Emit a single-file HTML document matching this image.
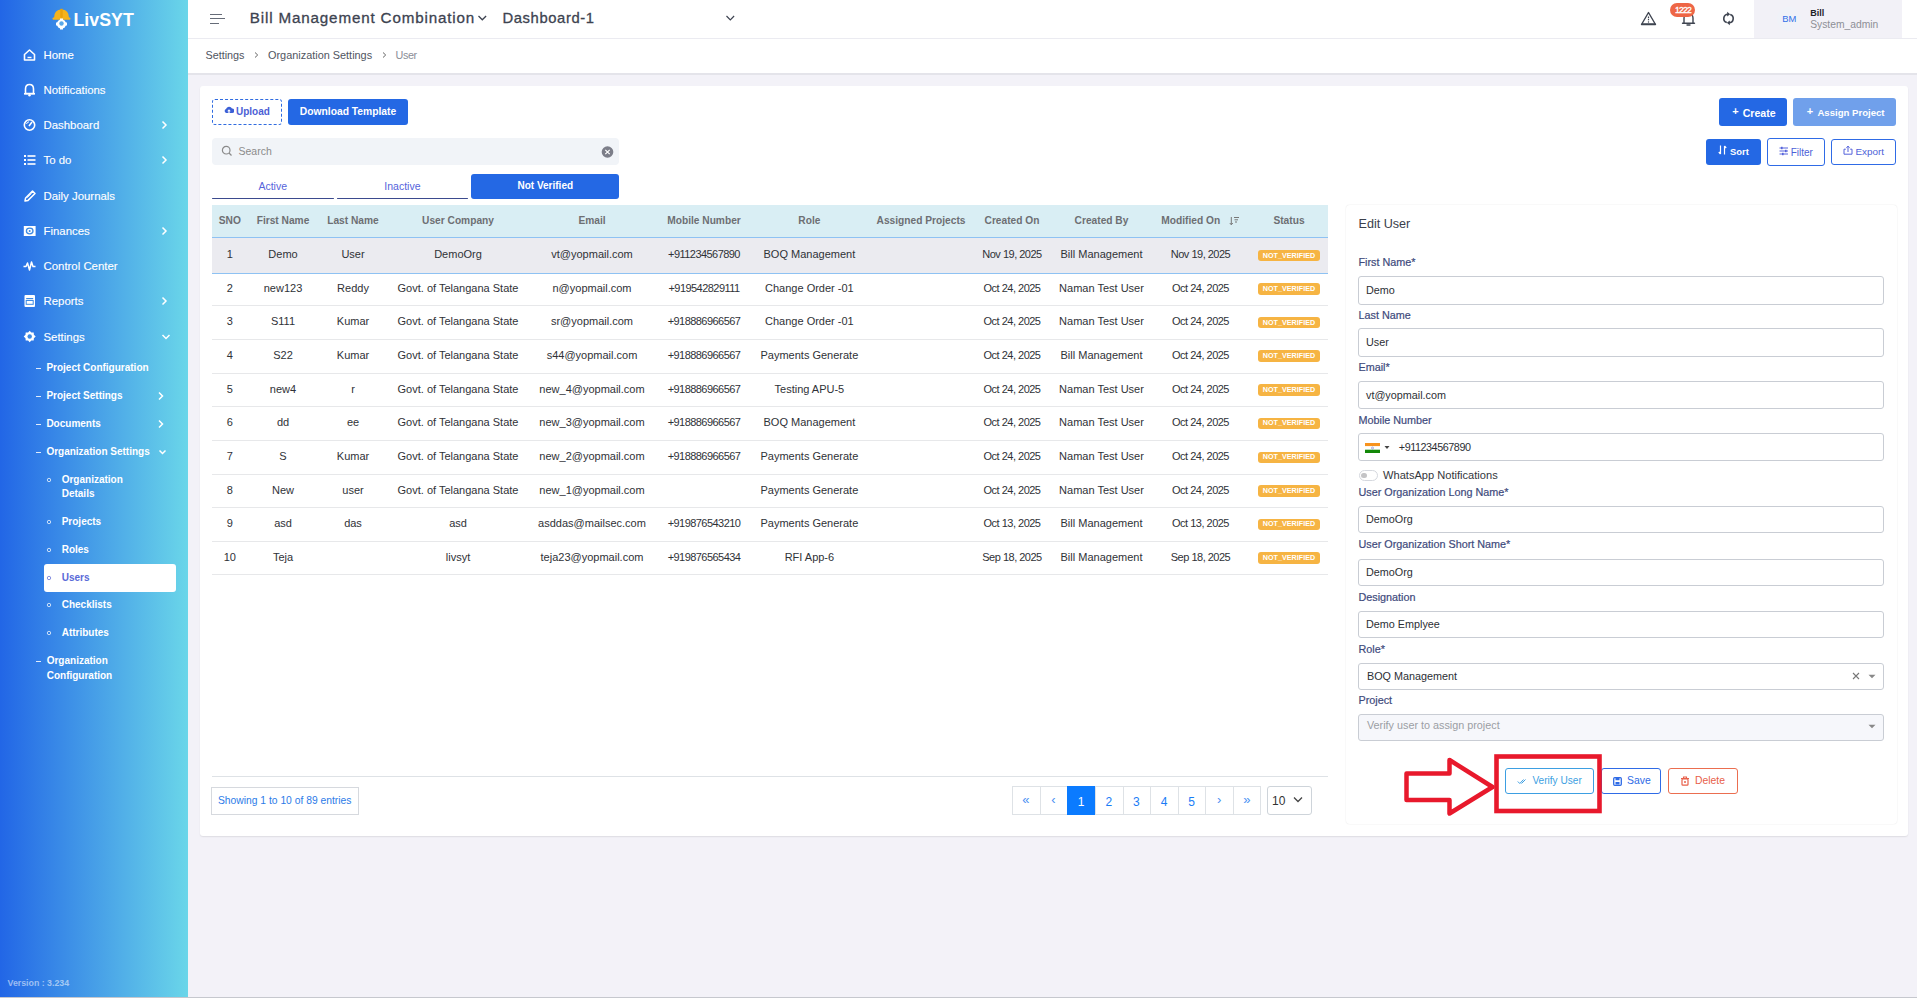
<!DOCTYPE html>
<html><head><meta charset="utf-8"><title>LivSYT - Users</title>
<style>
html,body{margin:0;padding:0;}
body{width:1917px;height:998px;overflow:hidden;position:relative;background:#f3f2f8;font-family:"Liberation Sans", sans-serif;}
.t{position:absolute;white-space:nowrap;}
.b{position:absolute;box-sizing:border-box;}
</style></head><body>

<div class="b" style="left:0px;top:0px;width:188px;height:998px;background:linear-gradient(90deg,#2266e6 0%,#6ad6e9 100%);"></div>
<svg class="b" style="left:52px;top:8px;" width="19" height="22" viewBox="0 0 19 22">
<path d="M2 10 Q2 1.5 9.5 1.5 Q17 1.5 17 10 Z" fill="#f5b31b"/>
<rect x="0.5" y="9.5" width="18" height="2.2" rx="1" fill="#f5b31b"/>
<rect x="8.3" y="0.8" width="2.4" height="9" fill="#e9a20c"/>
<circle cx="9.5" cy="16" r="4.6" fill="#fff"/>
<rect x="8" y="10.5" width="3" height="11" fill="#fff"/>
<rect x="4" y="14.5" width="11" height="3" fill="#fff"/>
<circle cx="9.5" cy="15.5" r="2.2" fill="#5aa8e8"/>
</svg>
<div class="t" style="left:73.50px;top:9.70px;font-size:17.8px;color:#fff;font-weight:bold;line-height:20px;">LivSYT</div>
<svg class="b" style="left:22.5px;top:48px;" width="13.5" height="14" viewBox="0 0 13.5 14"><path d="M1.5 6.5 L6.5 2 L11.5 6.5 V12 H1.5 Z" fill="none" stroke="#fff" stroke-width="1.6" stroke-linejoin="round"/><line x1="4.5" y1="9.5" x2="8.5" y2="9.5" stroke="#fff" stroke-width="1.4"/></svg>
<div class="t" style="left:43.50px;top:45.33px;font-size:11.4px;color:#fff;font-weight:normal;line-height:20px;-webkit-text-stroke:0.12px #fff;">Home</div>
<svg class="b" style="left:22.5px;top:83px;" width="13.5" height="14" viewBox="0 0 13.5 14"><path d="M2.5 10.5 V6 Q2.5 1.5 6.5 1.5 Q10.5 1.5 10.5 6 V10.5 Z" fill="none" stroke="#fff" stroke-width="1.6"/><line x1="1" y1="10.8" x2="12" y2="10.8" stroke="#fff" stroke-width="1.6"/><circle cx="6.5" cy="12.3" r="1.2" fill="#fff"/></svg>
<div class="t" style="left:43.50px;top:80.23px;font-size:11.4px;color:#fff;font-weight:normal;line-height:20px;-webkit-text-stroke:0.12px #fff;">Notifications</div>
<svg class="b" style="left:22.5px;top:118px;" width="13.5" height="14" viewBox="0 0 13.5 14"><circle cx="6.5" cy="7" r="5.2" fill="none" stroke="#fff" stroke-width="1.6"/><line x1="6" y1="8" x2="9" y2="4" stroke="#fff" stroke-width="1.5"/><path d="M3.5 6 A3 3 0 0 1 6 3.8" fill="none" stroke="#fff" stroke-width="1"/></svg>
<div class="t" style="left:43.50px;top:115.33px;font-size:11.4px;color:#fff;font-weight:normal;line-height:20px;-webkit-text-stroke:0.12px #fff;">Dashboard</div>
<svg class="b" style="left:160px;top:120px;" width="8" height="10" viewBox="0 0 8 10"><polyline points="2.5,1.5 6,5 2.5,8.5" fill="none" stroke="#fff" stroke-width="1.5"/></svg>
<svg class="b" style="left:22.5px;top:153px;" width="13.5" height="14" viewBox="0 0 13.5 14"><rect x="1" y="2" width="2" height="2" fill="#fff"/><rect x="4.5" y="2.2" width="8" height="1.6" fill="#fff"/><rect x="1" y="6" width="2" height="2" fill="#fff"/><rect x="4.5" y="6.2" width="8" height="1.6" fill="#fff"/><rect x="1" y="10" width="2" height="2" fill="#fff"/><rect x="4.5" y="10.2" width="8" height="1.6" fill="#fff"/></svg>
<div class="t" style="left:43.50px;top:150.13px;font-size:11.4px;color:#fff;font-weight:normal;line-height:20px;-webkit-text-stroke:0.12px #fff;">To do</div>
<svg class="b" style="left:160px;top:155px;" width="8" height="10" viewBox="0 0 8 10"><polyline points="2.5,1.5 6,5 2.5,8.5" fill="none" stroke="#fff" stroke-width="1.5"/></svg>
<svg class="b" style="left:22.5px;top:189px;" width="13.5" height="14" viewBox="0 0 13.5 14"><path d="M2 12 L2.6 9 L9.5 2 L12 4.5 L5 11.4 Z" fill="none" stroke="#fff" stroke-width="1.5" stroke-linejoin="round"/><line x1="4" y1="8.8" x2="8.5" y2="4.3" stroke="#fff" stroke-width="1"/></svg>
<div class="t" style="left:43.50px;top:186.13px;font-size:11.4px;color:#fff;font-weight:normal;line-height:20px;-webkit-text-stroke:0.12px #fff;">Daily Journals</div>
<svg class="b" style="left:22.5px;top:224px;" width="13.5" height="14" viewBox="0 0 13.5 14"><rect x="0.8" y="2" width="11.8" height="10" fill="#fff"/><ellipse cx="6.7" cy="7" rx="3.3" ry="2.8" fill="none" stroke="#3d8ae4" stroke-width="1.3"/><circle cx="6.7" cy="7" r="1" fill="#3d8ae4"/></svg>
<div class="t" style="left:43.50px;top:221.13px;font-size:11.4px;color:#fff;font-weight:normal;line-height:20px;-webkit-text-stroke:0.12px #fff;">Finances</div>
<svg class="b" style="left:160px;top:226px;" width="8" height="10" viewBox="0 0 8 10"><polyline points="2.5,1.5 6,5 2.5,8.5" fill="none" stroke="#fff" stroke-width="1.5"/></svg>
<svg class="b" style="left:22.5px;top:259px;" width="13.5" height="14" viewBox="0 0 13.5 14"><polyline points="0.5,7.5 3,7.5 4.5,4 6.5,11 8.5,3 10,7.5 12.5,7.5" fill="none" stroke="#fff" stroke-width="1.5" stroke-linejoin="round"/></svg>
<div class="t" style="left:43.50px;top:256.43px;font-size:11.4px;color:#fff;font-weight:normal;line-height:20px;-webkit-text-stroke:0.12px #fff;">Control Center</div>
<svg class="b" style="left:22.5px;top:294px;" width="13.5" height="14" viewBox="0 0 13.5 14"><rect x="1.5" y="1" width="10.5" height="12" rx="1" fill="#fff"/><rect x="3.2" y="4" width="7" height="1.2" fill="#3d8ae4"/><rect x="3.2" y="6.5" width="7" height="3.8" fill="none" stroke="#3d8ae4" stroke-width="1"/></svg>
<div class="t" style="left:43.50px;top:291.33px;font-size:11.4px;color:#fff;font-weight:normal;line-height:20px;-webkit-text-stroke:0.12px #fff;">Reports</div>
<svg class="b" style="left:160px;top:296px;" width="8" height="10" viewBox="0 0 8 10"><polyline points="2.5,1.5 6,5 2.5,8.5" fill="none" stroke="#fff" stroke-width="1.5"/></svg>
<svg class="b" style="left:22.5px;top:330px;" width="13.5" height="14" viewBox="0 0 13.5 14"><path d="M6.7 0.8 L8.3 2.6 L10.7 2.4 L10.9 4.8 L12.7 6.5 L10.9 8.2 L10.7 10.6 L8.3 10.4 L6.7 12.2 L5.1 10.4 L2.7 10.6 L2.5 8.2 L0.7 6.5 L2.5 4.8 L2.7 2.4 L5.1 2.6 Z" fill="#fff"/><circle cx="6.7" cy="6.5" r="2.2" fill="#3d8ae4"/></svg>
<div class="t" style="left:43.50px;top:326.93px;font-size:11.4px;color:#fff;font-weight:normal;line-height:20px;-webkit-text-stroke:0.12px #fff;">Settings</div>
<svg class="b" style="left:161px;top:333px;" width="10" height="8" viewBox="0 0 10 8"><polyline points="1.5,2 5,5.5 8.5,2" fill="none" stroke="#fff" stroke-width="1.5"/></svg>
<div class="b" style="left:35.7px;top:367.5px;width:5.099999999999994px;height:1.0px;background:rgba(255,255,255,0.85);"></div>
<div class="t" style="left:46.40px;top:357.62px;font-size:10px;color:#fff;font-weight:bold;line-height:20px;">Project Configuration</div>
<div class="b" style="left:35.7px;top:395.7px;width:5.099999999999994px;height:1.0px;background:rgba(255,255,255,0.85);"></div>
<div class="t" style="left:46.40px;top:385.81px;font-size:10px;color:#fff;font-weight:bold;line-height:20px;">Project Settings</div>
<svg class="b" style="left:157px;top:391px;" width="8" height="10" viewBox="0 0 8 10"><polyline points="2,1.5 5.5,5 2,8.5" fill="none" stroke="#fff" stroke-width="1.5"/></svg>
<div class="b" style="left:35.7px;top:423.6px;width:5.099999999999994px;height:1.0px;background:rgba(255,255,255,0.85);"></div>
<div class="t" style="left:46.40px;top:413.72px;font-size:10px;color:#fff;font-weight:bold;line-height:20px;">Documents</div>
<svg class="b" style="left:157px;top:419px;" width="8" height="10" viewBox="0 0 8 10"><polyline points="2,1.5 5.5,5 2,8.5" fill="none" stroke="#fff" stroke-width="1.5"/></svg>
<div class="b" style="left:35.7px;top:451.7px;width:5.099999999999994px;height:1.0px;background:rgba(255,255,255,0.85);"></div>
<div class="t" style="left:46.40px;top:441.81px;font-size:10px;color:#fff;font-weight:bold;line-height:20px;">Organization Settings</div>
<svg class="b" style="left:157.5px;top:449px;" width="9" height="7" viewBox="0 0 9 7"><polyline points="1.5,1.5 4.5,4.5 7.5,1.5" fill="none" stroke="#fff" stroke-width="1.5"/></svg>
<div class="b" style="left:44px;top:564px;width:132px;height:28px;background:#fff;border-radius:3px;"></div>
<svg class="b" style="left:46px;top:477px;" width="6" height="6" viewBox="0 0 6 6"><circle cx="3" cy="3" r="1.7" fill="none" stroke="rgba(255,255,255,0.8)" stroke-width="0.9"/></svg>
<div class="t" style="left:61.70px;top:469.92px;font-size:10px;color:#fff;font-weight:bold;line-height:20px;">Organization</div>
<div class="t" style="left:61.70px;top:483.72px;font-size:10px;color:#fff;font-weight:bold;line-height:20px;">Details</div>
<svg class="b" style="left:46px;top:519px;" width="6" height="6" viewBox="0 0 6 6"><circle cx="3" cy="3" r="1.7" fill="none" stroke="rgba(255,255,255,0.8)" stroke-width="0.9"/></svg>
<div class="t" style="left:61.70px;top:511.82px;font-size:10px;color:#fff;font-weight:bold;line-height:20px;">Projects</div>
<svg class="b" style="left:46px;top:547px;" width="6" height="6" viewBox="0 0 6 6"><circle cx="3" cy="3" r="1.7" fill="none" stroke="rgba(255,255,255,0.8)" stroke-width="0.9"/></svg>
<div class="t" style="left:61.70px;top:539.82px;font-size:10px;color:#fff;font-weight:bold;line-height:20px;">Roles</div>
<svg class="b" style="left:46px;top:575px;" width="6" height="6" viewBox="0 0 6 6"><circle cx="3" cy="3" r="1.7" fill="none" stroke="#7a84dc" stroke-width="0.9"/></svg>
<div class="t" style="left:61.70px;top:567.91px;font-size:10px;color:#5a6ad8;font-weight:bold;line-height:20px;">Users</div>
<svg class="b" style="left:46px;top:602px;" width="6" height="6" viewBox="0 0 6 6"><circle cx="3" cy="3" r="1.7" fill="none" stroke="rgba(255,255,255,0.8)" stroke-width="0.9"/></svg>
<div class="t" style="left:61.70px;top:594.82px;font-size:10px;color:#fff;font-weight:bold;line-height:20px;">Checklists</div>
<svg class="b" style="left:46px;top:630px;" width="6" height="6" viewBox="0 0 6 6"><circle cx="3" cy="3" r="1.7" fill="none" stroke="rgba(255,255,255,0.8)" stroke-width="0.9"/></svg>
<div class="t" style="left:61.70px;top:622.82px;font-size:10px;color:#fff;font-weight:bold;line-height:20px;">Attributes</div>
<div class="b" style="left:36px;top:660.8px;width:5px;height:1.0px;background:rgba(255,255,255,0.85);"></div>
<div class="t" style="left:46.70px;top:650.91px;font-size:10px;color:#fff;font-weight:bold;line-height:20px;">Organization</div>
<div class="t" style="left:46.70px;top:665.51px;font-size:10px;color:#fff;font-weight:bold;line-height:20px;">Configuration</div>
<div class="t" style="left:7.50px;top:972.90px;font-size:8.8px;color:rgba(255,255,255,0.55);font-weight:bold;line-height:20px;">Version : 3.234</div>
<div class="b" style="left:188px;top:0px;width:1729px;height:38px;background:#fff;"></div>
<div class="b" style="left:188px;top:38px;width:1729px;height:1px;background:#ebebf1;"></div>
<div class="b" style="left:210px;top:13.5px;width:12px;height:1.3000000000000007px;background:#666c78;"></div>
<div class="b" style="left:210px;top:18.2px;width:15px;height:1.3000000000000007px;background:#666c78;"></div>
<div class="b" style="left:210px;top:22.9px;width:9px;height:1.3000000000000007px;background:#666c78;"></div>
<div class="t" style="left:249.80px;top:8.37px;font-size:15.2px;color:#3d4350;font-weight:normal;line-height:20px;letter-spacing:0.84px;-webkit-text-stroke:0.3px #3d4350;">Bill Management Combination</div>
<svg class="b" style="left:477px;top:14px;" width="11" height="8" viewBox="0 0 11 8"><polyline points="1.5,2 5.3,5.8 9.1,2" fill="none" stroke="#3d4350" stroke-width="1.3"/></svg>
<div class="t" style="left:502.50px;top:7.87px;font-size:14.8px;color:#3d4350;font-weight:normal;line-height:20px;letter-spacing:0.6px;-webkit-text-stroke:0.3px #3d4350;">Dashboard-1</div>
<svg class="b" style="left:725px;top:14px;" width="11" height="8" viewBox="0 0 11 8"><polyline points="1.5,2 5.3,5.8 9.1,2" fill="none" stroke="#3d4350" stroke-width="1.2"/></svg>
<svg class="b" style="left:1640px;top:11px;" width="17" height="15" viewBox="0 0 17 15"><path d="M8.5 1.5 L15.5 13.5 H1.5 Z" fill="none" stroke="#3e4450" stroke-width="1.4" stroke-linejoin="round"/><rect x="1.5" y="12.3" width="14" height="1.3" fill="#3e4450"/><line x1="8.5" y1="5.5" x2="8.5" y2="9.5" stroke="#3e4450" stroke-width="1.2" stroke-dasharray="1.5 0.8"/><circle cx="8.5" cy="11" r="0.7" fill="#3e4450"/></svg>
<svg class="b" style="left:1681px;top:12px;" width="15" height="15" viewBox="0 0 15 15"><path d="M3 11 V6 Q3 2 7.5 2 Q12 2 12 6 V11" fill="none" stroke="#3e4450" stroke-width="1.4"/><line x1="1.5" y1="11.3" x2="13.5" y2="11.3" stroke="#3e4450" stroke-width="1.4" stroke-linecap="round"/><path d="M6 13 H9" stroke="#3e4450" stroke-width="1.4" stroke-linecap="round"/></svg>
<div class="b" style="left:1670px;top:3px;width:25px;height:14px;background:#ee6646;border-radius:7px;"></div>
<div class="t" style="left:1668.00px;top:0.30px;width:30px;text-align:center;font-size:8.6px;color:#fff;font-weight:normal;line-height:20px;letter-spacing:-0.75px;-webkit-text-stroke:0.35px #fff;">1222</div>
<svg class="b" style="left:1721px;top:11px;" width="15" height="15" viewBox="0 0 15 15"><path d="M7 3.2 A4.3 4.3 0 0 0 5.8 11.6" fill="none" stroke="#3e4450" stroke-width="1.6"/><path d="M8 11.8 A4.3 4.3 0 0 0 9.2 3.4" fill="none" stroke="#3e4450" stroke-width="1.6"/><path d="M6.2 0.8 L9.2 3.2 L6.2 5.6 Z" fill="#3e4450"/><path d="M8.8 9.4 L5.8 11.8 L8.8 14.2 Z" fill="#3e4450"/></svg>
<div class="b" style="left:1754px;top:0px;width:148px;height:38px;background:#f2f1f7;"></div>
<div class="b" style="left:1777px;top:6.5px;width:24px;height:24.0px;background:#f0f2f8;border-radius:50%;"></div>
<div class="t" style="left:1774.20px;top:8.81px;width:30px;text-align:center;font-size:9.4px;color:#3070e8;font-weight:normal;line-height:20px;">BM</div>
<div class="t" style="left:1810.20px;top:2.50px;font-size:9px;color:#1f2328;font-weight:bold;line-height:20px;">Bill</div>
<div class="t" style="left:1810.20px;top:14.62px;font-size:10.3px;color:#8d8f96;font-weight:normal;line-height:20px;">System_admin</div>
<div class="b" style="left:188px;top:39px;width:1729px;height:34px;background:#fff;"></div>
<div class="b" style="left:188px;top:73px;width:1729px;height:2px;background:#e4e4ea;"></div>
<div class="t" style="left:205.50px;top:44.72px;font-size:10.8px;color:#50555f;font-weight:normal;line-height:20px;">Settings</div>
<svg class="b" style="left:253px;top:51px;" width="7" height="8" viewBox="0 0 7 8"><polyline points="2,1.5 4.7,4 2,6.5" fill="none" stroke="#666" stroke-width="1"/></svg>
<div class="t" style="left:268.00px;top:44.73px;font-size:10.9px;color:#50555f;font-weight:normal;line-height:20px;">Organization Settings</div>
<svg class="b" style="left:381px;top:51px;" width="7" height="8" viewBox="0 0 7 8"><polyline points="2,1.5 4.7,4 2,6.5" fill="none" stroke="#666" stroke-width="1"/></svg>
<div class="t" style="left:395.60px;top:44.72px;font-size:10.8px;color:#8a8e97;font-weight:normal;line-height:20px;letter-spacing:-0.4px;">User</div>
<div class="b" style="left:200px;top:86px;width:1708px;height:750px;background:#fff;border-radius:3px;box-shadow:0 1px 1.5px rgba(0,0,0,0.09);"></div>
<div class="b" style="left:212px;top:99px;width:70px;height:26px;border:1.3px dashed #2f6be0;border-radius:3px;"></div>
<svg class="b" style="left:223.5px;top:106px;" width="10" height="8" viewBox="0 0 10 8"><path d="M2.2 7 A2.1 2.1 0 0 1 2 3 A3.2 3.2 0 0 1 8 2.6 A2.2 2.2 0 0 1 8.3 7 Z" fill="#3b5fd6"/><path d="M5 3.3 L3.2 5.2 H4.4 V7 H5.6 V5.2 H6.8 Z" fill="#fff"/></svg>
<div class="t" style="left:236.00px;top:101.61px;font-size:10px;color:#4c5fd5;font-weight:bold;line-height:20px;">Upload</div>
<div class="b" style="left:288px;top:99px;width:120px;height:26px;background:#2468e4;border-radius:3px;"></div>
<div class="t" style="left:288.00px;top:101.92px;width:120px;text-align:center;font-size:10.3px;color:#fff;font-weight:bold;line-height:20px;">Download Template</div>
<div class="b" style="left:212px;top:138px;width:407px;height:27px;background:#f1f4f8;border-radius:4px;"></div>
<svg class="b" style="left:221px;top:145px;" width="12" height="12" viewBox="0 0 12 12"><circle cx="5.2" cy="5.2" r="3.8" fill="none" stroke="#8a8a8a" stroke-width="1.2"/><line x1="8" y1="8" x2="10.5" y2="10.5" stroke="#8a8a8a" stroke-width="1.3"/></svg>
<div class="t" style="left:238.50px;top:141.12px;font-size:10.5px;color:#8b8b8b;font-weight:normal;line-height:20px;">Search</div>
<svg class="b" style="left:601px;top:146px;" width="13" height="12" viewBox="0 0 13 12"><circle cx="6.5" cy="6" r="5.8" fill="#7c7e89"/><path d="M4.3 3.8 L8.7 8.2 M8.7 3.8 L4.3 8.2" stroke="#fff" stroke-width="1.2"/></svg>
<div class="b" style="left:212.3px;top:197.5px;width:121.5px;height:1.6999999999999886px;background:#3b4a8e;border-radius:1px;"></div>
<div class="b" style="left:337.2px;top:197.5px;width:130.8px;height:1.6999999999999886px;background:#3b4a8e;border-radius:1px;"></div>
<div class="t" style="left:212.75px;top:175.52px;width:120px;text-align:center;font-size:10.5px;color:#5563db;font-weight:normal;line-height:20px;">Active</div>
<div class="t" style="left:342.40px;top:175.52px;width:120px;text-align:center;font-size:10.5px;color:#5563db;font-weight:normal;line-height:20px;">Inactive</div>
<div class="b" style="left:471px;top:174px;width:148px;height:25px;background:#2468e4;border-radius:3px;"></div>
<div class="t" style="left:475.30px;top:175.81px;width:140px;text-align:center;font-size:10px;color:#fff;font-weight:bold;line-height:20px;">Not Verified</div>
<div class="b" style="left:1719px;top:98px;width:68px;height:27.599999999999994px;background:#2468e4;border-radius:3px;"></div>
<div class="t" style="left:1730.50px;top:100.73px;width:10px;text-align:center;font-size:11px;color:#fff;font-weight:bold;line-height:20px;">+</div>
<div class="t" style="left:1742.70px;top:102.62px;font-size:10.6px;color:#fff;font-weight:bold;line-height:20px;">Create</div>
<div class="b" style="left:1793px;top:98px;width:103px;height:27.599999999999994px;background:#70a0eb;border-radius:3px;"></div>
<div class="t" style="left:1805.00px;top:100.73px;width:10px;text-align:center;font-size:11px;color:#fff;font-weight:bold;line-height:20px;">+</div>
<div class="t" style="left:1817.40px;top:102.61px;font-size:9.6px;color:#fff;font-weight:bold;line-height:20px;">Assign Project</div>
<div class="b" style="left:1706px;top:139px;width:55px;height:26px;background:#2468e4;border-radius:3px;"></div>
<svg class="b" style="left:1718px;top:144px;" width="10" height="12" viewBox="0 0 10 12"><path d="M2.5 1.5 V10 M0.8 8 L2.5 10 M6.5 10.5 V2 M6.5 2 L8.2 4" fill="none" stroke="#fff" stroke-width="1.2"/></svg>
<div class="t" style="left:1730.00px;top:142.11px;font-size:9.4px;color:#fff;font-weight:bold;line-height:20px;">Sort</div>
<div class="b" style="left:1767px;top:138.2px;width:58px;height:27.400000000000006px;border:1.2px solid #2f6be6;border-radius:3px;background:#fff;"></div>
<svg class="b" style="left:1778.5px;top:145.5px;" width="10" height="10" viewBox="0 0 10 10"><path d="M0.5 2 H9 M0.5 5 H9 M0.5 8 H9" stroke="#5563db" stroke-width="1"/><rect x="2" y="0.8" width="1.6" height="2.4" fill="#5563db"/><rect x="6" y="3.8" width="1.6" height="2.4" fill="#5563db"/><rect x="3" y="6.8" width="1.6" height="2.4" fill="#5563db"/></svg>
<div class="t" style="left:1790.70px;top:142.62px;font-size:10px;color:#4d5fd8;font-weight:normal;line-height:20px;">Filter</div>
<div class="b" style="left:1831px;top:139px;width:65px;height:26px;border:1.2px solid #2f6be6;border-radius:3px;background:#fff;"></div>
<svg class="b" style="left:1843px;top:145px;" width="10" height="10" viewBox="0 0 10 10"><path d="M2.8 4.2 H1 V9.2 H9 V4.2 H7.2" fill="none" stroke="#5563db" stroke-width="1"/><path d="M5 7 V1.2 M3.3 2.8 L5 1.2 L6.7 2.8" fill="none" stroke="#5563db" stroke-width="1"/></svg>
<div class="t" style="left:1855.50px;top:142.11px;font-size:9.9px;color:#4d5fd8;font-weight:normal;line-height:20px;">Export</div>
<div class="b" style="left:212px;top:205px;width:1116px;height:32px;background:#d9eef4;"></div>
<div class="b" style="left:212px;top:237px;width:1116px;height:1px;background:#8ec2f3;"></div>
<div class="b" style="left:212px;top:238px;width:1116px;height:34.5px;background:#ebebf0;"></div>
<div class="b" style="left:212px;top:272.5px;width:1116px;height:1.0px;background:#8ec2f3;"></div>
<div class="t" style="left:159.80px;top:210.92px;width:140px;text-align:center;font-size:10.2px;color:#6d6f73;font-weight:bold;line-height:20px;">SNO</div>
<div class="t" style="left:213.00px;top:210.92px;width:140px;text-align:center;font-size:10.2px;color:#6d6f73;font-weight:bold;line-height:20px;">First Name</div>
<div class="t" style="left:283.00px;top:210.92px;width:140px;text-align:center;font-size:10.2px;color:#6d6f73;font-weight:bold;line-height:20px;">Last Name</div>
<div class="t" style="left:388.00px;top:210.92px;width:140px;text-align:center;font-size:10.2px;color:#6d6f73;font-weight:bold;line-height:20px;">User Company</div>
<div class="t" style="left:522.00px;top:210.92px;width:140px;text-align:center;font-size:10.2px;color:#6d6f73;font-weight:bold;line-height:20px;">Email</div>
<div class="t" style="left:634.00px;top:210.92px;width:140px;text-align:center;font-size:10.2px;color:#6d6f73;font-weight:bold;line-height:20px;">Mobile Number</div>
<div class="t" style="left:739.40px;top:210.92px;width:140px;text-align:center;font-size:10.2px;color:#6d6f73;font-weight:bold;line-height:20px;">Role</div>
<div class="t" style="left:851.00px;top:210.92px;width:140px;text-align:center;font-size:10.2px;color:#6d6f73;font-weight:bold;line-height:20px;">Assigned Projects</div>
<div class="t" style="left:942.00px;top:210.92px;width:140px;text-align:center;font-size:10.2px;color:#6d6f73;font-weight:bold;line-height:20px;">Created On</div>
<div class="t" style="left:1031.50px;top:210.92px;width:140px;text-align:center;font-size:10.2px;color:#6d6f73;font-weight:bold;line-height:20px;">Created By</div>
<div class="t" style="left:1120.70px;top:210.92px;width:140px;text-align:center;font-size:10.2px;color:#6d6f73;font-weight:bold;line-height:20px;">Modified On</div>
<div class="t" style="left:1219.00px;top:210.92px;width:140px;text-align:center;font-size:10.2px;color:#6d6f73;font-weight:bold;line-height:20px;">Status</div>
<svg class="b" style="left:1229px;top:215.5px;" width="11" height="10" viewBox="0 0 11 10"><path d="M2.3 1 V8.5 M0.8 7 L2.3 8.8 L3.8 7" fill="none" stroke="#777" stroke-width="1"/><path d="M5 1.5 H10 M5.5 3.8 H9 M6 6 H8" stroke="#777" stroke-width="1"/></svg>
<div class="t" style="left:144.80px;top:244.43px;width:170px;text-align:center;font-size:11px;color:#2f3237;font-weight:normal;line-height:20px;">1</div>
<div class="t" style="left:198.00px;top:244.43px;width:170px;text-align:center;font-size:11px;color:#2f3237;font-weight:normal;line-height:20px;">Demo</div>
<div class="t" style="left:268.00px;top:244.43px;width:170px;text-align:center;font-size:11px;color:#2f3237;font-weight:normal;line-height:20px;">User</div>
<div class="t" style="left:373.00px;top:244.43px;width:170px;text-align:center;font-size:11px;color:#2f3237;font-weight:normal;line-height:20px;">DemoOrg</div>
<div class="t" style="left:507.00px;top:244.43px;width:170px;text-align:center;font-size:11px;color:#2f3237;font-weight:normal;line-height:20px;">vt@yopmail.com</div>
<div class="t" style="left:619.00px;top:244.43px;width:170px;text-align:center;font-size:11px;color:#2f3237;font-weight:normal;line-height:20px;letter-spacing:-0.55px;">+911234567890</div>
<div class="t" style="left:724.40px;top:244.43px;width:170px;text-align:center;font-size:11px;color:#2f3237;font-weight:normal;line-height:20px;">BOQ Management</div>
<div class="t" style="left:927.00px;top:244.43px;width:170px;text-align:center;font-size:11px;color:#2f3237;font-weight:normal;line-height:20px;letter-spacing:-0.5px;">Nov 19, 2025</div>
<div class="t" style="left:1016.50px;top:244.43px;width:170px;text-align:center;font-size:11px;color:#2f3237;font-weight:normal;line-height:20px;">Bill Management</div>
<div class="t" style="left:1115.50px;top:244.43px;width:170px;text-align:center;font-size:11px;color:#2f3237;font-weight:normal;line-height:20px;letter-spacing:-0.5px;">Nov 19, 2025</div>
<div class="b" style="left:1258px;top:249.70000000000002px;width:62px;height:11.799999999999983px;background:#f6b443;border-radius:3px;"></div>
<div class="t" style="left:1254.00px;top:245.58px;width:70px;text-align:center;font-size:7.2px;color:#fff;font-weight:bold;line-height:20px;">NOT_VERIFIED</div>
<div class="t" style="left:144.80px;top:277.93px;width:170px;text-align:center;font-size:11px;color:#2f3237;font-weight:normal;line-height:20px;">2</div>
<div class="t" style="left:198.00px;top:277.93px;width:170px;text-align:center;font-size:11px;color:#2f3237;font-weight:normal;line-height:20px;">new123</div>
<div class="t" style="left:268.00px;top:277.93px;width:170px;text-align:center;font-size:11px;color:#2f3237;font-weight:normal;line-height:20px;">Reddy</div>
<div class="t" style="left:373.00px;top:277.93px;width:170px;text-align:center;font-size:11px;color:#2f3237;font-weight:normal;line-height:20px;">Govt. of Telangana State</div>
<div class="t" style="left:507.00px;top:277.93px;width:170px;text-align:center;font-size:11px;color:#2f3237;font-weight:normal;line-height:20px;">n@yopmail.com</div>
<div class="t" style="left:619.00px;top:277.93px;width:170px;text-align:center;font-size:11px;color:#2f3237;font-weight:normal;line-height:20px;letter-spacing:-0.55px;">+919542829111</div>
<div class="t" style="left:724.40px;top:277.93px;width:170px;text-align:center;font-size:11px;color:#2f3237;font-weight:normal;line-height:20px;">Change Order -01</div>
<div class="t" style="left:927.00px;top:277.93px;width:170px;text-align:center;font-size:11px;color:#2f3237;font-weight:normal;line-height:20px;letter-spacing:-0.5px;">Oct 24, 2025</div>
<div class="t" style="left:1016.50px;top:277.93px;width:170px;text-align:center;font-size:11px;color:#2f3237;font-weight:normal;line-height:20px;">Naman Test User</div>
<div class="t" style="left:1115.50px;top:277.93px;width:170px;text-align:center;font-size:11px;color:#2f3237;font-weight:normal;line-height:20px;letter-spacing:-0.5px;">Oct 24, 2025</div>
<div class="b" style="left:1258px;top:283.2px;width:62px;height:11.800000000000011px;background:#f6b443;border-radius:3px;"></div>
<div class="t" style="left:1254.00px;top:279.08px;width:70px;text-align:center;font-size:7.2px;color:#fff;font-weight:bold;line-height:20px;">NOT_VERIFIED</div>
<div class="b" style="left:212px;top:305px;width:1116px;height:1px;background:#e7e8ea;"></div>
<div class="t" style="left:144.80px;top:311.43px;width:170px;text-align:center;font-size:11px;color:#2f3237;font-weight:normal;line-height:20px;">3</div>
<div class="t" style="left:198.00px;top:311.43px;width:170px;text-align:center;font-size:11px;color:#2f3237;font-weight:normal;line-height:20px;">S111</div>
<div class="t" style="left:268.00px;top:311.43px;width:170px;text-align:center;font-size:11px;color:#2f3237;font-weight:normal;line-height:20px;">Kumar</div>
<div class="t" style="left:373.00px;top:311.43px;width:170px;text-align:center;font-size:11px;color:#2f3237;font-weight:normal;line-height:20px;">Govt. of Telangana State</div>
<div class="t" style="left:507.00px;top:311.43px;width:170px;text-align:center;font-size:11px;color:#2f3237;font-weight:normal;line-height:20px;">sr@yopmail.com</div>
<div class="t" style="left:619.00px;top:311.43px;width:170px;text-align:center;font-size:11px;color:#2f3237;font-weight:normal;line-height:20px;letter-spacing:-0.55px;">+918886966567</div>
<div class="t" style="left:724.40px;top:311.43px;width:170px;text-align:center;font-size:11px;color:#2f3237;font-weight:normal;line-height:20px;">Change Order -01</div>
<div class="t" style="left:927.00px;top:311.43px;width:170px;text-align:center;font-size:11px;color:#2f3237;font-weight:normal;line-height:20px;letter-spacing:-0.5px;">Oct 24, 2025</div>
<div class="t" style="left:1016.50px;top:311.43px;width:170px;text-align:center;font-size:11px;color:#2f3237;font-weight:normal;line-height:20px;">Naman Test User</div>
<div class="t" style="left:1115.50px;top:311.43px;width:170px;text-align:center;font-size:11px;color:#2f3237;font-weight:normal;line-height:20px;letter-spacing:-0.5px;">Oct 24, 2025</div>
<div class="b" style="left:1258px;top:316.7px;width:62px;height:11.800000000000011px;background:#f6b443;border-radius:3px;"></div>
<div class="t" style="left:1254.00px;top:312.58px;width:70px;text-align:center;font-size:7.2px;color:#fff;font-weight:bold;line-height:20px;">NOT_VERIFIED</div>
<div class="b" style="left:212px;top:339px;width:1116px;height:1px;background:#e7e8ea;"></div>
<div class="t" style="left:144.80px;top:345.03px;width:170px;text-align:center;font-size:11px;color:#2f3237;font-weight:normal;line-height:20px;">4</div>
<div class="t" style="left:198.00px;top:345.03px;width:170px;text-align:center;font-size:11px;color:#2f3237;font-weight:normal;line-height:20px;">S22</div>
<div class="t" style="left:268.00px;top:345.03px;width:170px;text-align:center;font-size:11px;color:#2f3237;font-weight:normal;line-height:20px;">Kumar</div>
<div class="t" style="left:373.00px;top:345.03px;width:170px;text-align:center;font-size:11px;color:#2f3237;font-weight:normal;line-height:20px;">Govt. of Telangana State</div>
<div class="t" style="left:507.00px;top:345.03px;width:170px;text-align:center;font-size:11px;color:#2f3237;font-weight:normal;line-height:20px;">s44@yopmail.com</div>
<div class="t" style="left:619.00px;top:345.03px;width:170px;text-align:center;font-size:11px;color:#2f3237;font-weight:normal;line-height:20px;letter-spacing:-0.55px;">+918886966567</div>
<div class="t" style="left:724.40px;top:345.03px;width:170px;text-align:center;font-size:11px;color:#2f3237;font-weight:normal;line-height:20px;">Payments Generate</div>
<div class="t" style="left:927.00px;top:345.03px;width:170px;text-align:center;font-size:11px;color:#2f3237;font-weight:normal;line-height:20px;letter-spacing:-0.5px;">Oct 24, 2025</div>
<div class="t" style="left:1016.50px;top:345.03px;width:170px;text-align:center;font-size:11px;color:#2f3237;font-weight:normal;line-height:20px;">Bill Management</div>
<div class="t" style="left:1115.50px;top:345.03px;width:170px;text-align:center;font-size:11px;color:#2f3237;font-weight:normal;line-height:20px;letter-spacing:-0.5px;">Oct 24, 2025</div>
<div class="b" style="left:1258px;top:350.29999999999995px;width:62px;height:11.800000000000011px;background:#f6b443;border-radius:3px;"></div>
<div class="t" style="left:1254.00px;top:346.18px;width:70px;text-align:center;font-size:7.2px;color:#fff;font-weight:bold;line-height:20px;">NOT_VERIFIED</div>
<div class="b" style="left:212px;top:373px;width:1116px;height:1px;background:#e7e8ea;"></div>
<div class="t" style="left:144.80px;top:379.13px;width:170px;text-align:center;font-size:11px;color:#2f3237;font-weight:normal;line-height:20px;">5</div>
<div class="t" style="left:198.00px;top:379.13px;width:170px;text-align:center;font-size:11px;color:#2f3237;font-weight:normal;line-height:20px;">new4</div>
<div class="t" style="left:268.00px;top:379.13px;width:170px;text-align:center;font-size:11px;color:#2f3237;font-weight:normal;line-height:20px;">r</div>
<div class="t" style="left:373.00px;top:379.13px;width:170px;text-align:center;font-size:11px;color:#2f3237;font-weight:normal;line-height:20px;">Govt. of Telangana State</div>
<div class="t" style="left:507.00px;top:379.13px;width:170px;text-align:center;font-size:11px;color:#2f3237;font-weight:normal;line-height:20px;">new_4@yopmail.com</div>
<div class="t" style="left:619.00px;top:379.13px;width:170px;text-align:center;font-size:11px;color:#2f3237;font-weight:normal;line-height:20px;letter-spacing:-0.55px;">+918886966567</div>
<div class="t" style="left:724.40px;top:379.13px;width:170px;text-align:center;font-size:11px;color:#2f3237;font-weight:normal;line-height:20px;">Testing APU-5</div>
<div class="t" style="left:927.00px;top:379.13px;width:170px;text-align:center;font-size:11px;color:#2f3237;font-weight:normal;line-height:20px;letter-spacing:-0.5px;">Oct 24, 2025</div>
<div class="t" style="left:1016.50px;top:379.13px;width:170px;text-align:center;font-size:11px;color:#2f3237;font-weight:normal;line-height:20px;">Naman Test User</div>
<div class="t" style="left:1115.50px;top:379.13px;width:170px;text-align:center;font-size:11px;color:#2f3237;font-weight:normal;line-height:20px;letter-spacing:-0.5px;">Oct 24, 2025</div>
<div class="b" style="left:1258px;top:384.4px;width:62px;height:11.800000000000011px;background:#f6b443;border-radius:3px;"></div>
<div class="t" style="left:1254.00px;top:380.28px;width:70px;text-align:center;font-size:7.2px;color:#fff;font-weight:bold;line-height:20px;">NOT_VERIFIED</div>
<div class="b" style="left:212px;top:406px;width:1116px;height:1px;background:#e7e8ea;"></div>
<div class="t" style="left:144.80px;top:412.33px;width:170px;text-align:center;font-size:11px;color:#2f3237;font-weight:normal;line-height:20px;">6</div>
<div class="t" style="left:198.00px;top:412.33px;width:170px;text-align:center;font-size:11px;color:#2f3237;font-weight:normal;line-height:20px;">dd</div>
<div class="t" style="left:268.00px;top:412.33px;width:170px;text-align:center;font-size:11px;color:#2f3237;font-weight:normal;line-height:20px;">ee</div>
<div class="t" style="left:373.00px;top:412.33px;width:170px;text-align:center;font-size:11px;color:#2f3237;font-weight:normal;line-height:20px;">Govt. of Telangana State</div>
<div class="t" style="left:507.00px;top:412.33px;width:170px;text-align:center;font-size:11px;color:#2f3237;font-weight:normal;line-height:20px;">new_3@yopmail.com</div>
<div class="t" style="left:619.00px;top:412.33px;width:170px;text-align:center;font-size:11px;color:#2f3237;font-weight:normal;line-height:20px;letter-spacing:-0.55px;">+918886966567</div>
<div class="t" style="left:724.40px;top:412.33px;width:170px;text-align:center;font-size:11px;color:#2f3237;font-weight:normal;line-height:20px;">BOQ Management</div>
<div class="t" style="left:927.00px;top:412.33px;width:170px;text-align:center;font-size:11px;color:#2f3237;font-weight:normal;line-height:20px;letter-spacing:-0.5px;">Oct 24, 2025</div>
<div class="t" style="left:1016.50px;top:412.33px;width:170px;text-align:center;font-size:11px;color:#2f3237;font-weight:normal;line-height:20px;">Naman Test User</div>
<div class="t" style="left:1115.50px;top:412.33px;width:170px;text-align:center;font-size:11px;color:#2f3237;font-weight:normal;line-height:20px;letter-spacing:-0.5px;">Oct 24, 2025</div>
<div class="b" style="left:1258px;top:417.59999999999997px;width:62px;height:11.800000000000011px;background:#f6b443;border-radius:3px;"></div>
<div class="t" style="left:1254.00px;top:413.48px;width:70px;text-align:center;font-size:7.2px;color:#fff;font-weight:bold;line-height:20px;">NOT_VERIFIED</div>
<div class="b" style="left:212px;top:440px;width:1116px;height:1px;background:#e7e8ea;"></div>
<div class="t" style="left:144.80px;top:446.23px;width:170px;text-align:center;font-size:11px;color:#2f3237;font-weight:normal;line-height:20px;">7</div>
<div class="t" style="left:198.00px;top:446.23px;width:170px;text-align:center;font-size:11px;color:#2f3237;font-weight:normal;line-height:20px;">S</div>
<div class="t" style="left:268.00px;top:446.23px;width:170px;text-align:center;font-size:11px;color:#2f3237;font-weight:normal;line-height:20px;">Kumar</div>
<div class="t" style="left:373.00px;top:446.23px;width:170px;text-align:center;font-size:11px;color:#2f3237;font-weight:normal;line-height:20px;">Govt. of Telangana State</div>
<div class="t" style="left:507.00px;top:446.23px;width:170px;text-align:center;font-size:11px;color:#2f3237;font-weight:normal;line-height:20px;">new_2@yopmail.com</div>
<div class="t" style="left:619.00px;top:446.23px;width:170px;text-align:center;font-size:11px;color:#2f3237;font-weight:normal;line-height:20px;letter-spacing:-0.55px;">+918886966567</div>
<div class="t" style="left:724.40px;top:446.23px;width:170px;text-align:center;font-size:11px;color:#2f3237;font-weight:normal;line-height:20px;">Payments Generate</div>
<div class="t" style="left:927.00px;top:446.23px;width:170px;text-align:center;font-size:11px;color:#2f3237;font-weight:normal;line-height:20px;letter-spacing:-0.5px;">Oct 24, 2025</div>
<div class="t" style="left:1016.50px;top:446.23px;width:170px;text-align:center;font-size:11px;color:#2f3237;font-weight:normal;line-height:20px;">Naman Test User</div>
<div class="t" style="left:1115.50px;top:446.23px;width:170px;text-align:center;font-size:11px;color:#2f3237;font-weight:normal;line-height:20px;letter-spacing:-0.5px;">Oct 24, 2025</div>
<div class="b" style="left:1258px;top:451.5px;width:62px;height:11.800000000000011px;background:#f6b443;border-radius:3px;"></div>
<div class="t" style="left:1254.00px;top:447.38px;width:70px;text-align:center;font-size:7.2px;color:#fff;font-weight:bold;line-height:20px;">NOT_VERIFIED</div>
<div class="b" style="left:212px;top:474px;width:1116px;height:1px;background:#e7e8ea;"></div>
<div class="t" style="left:144.80px;top:480.03px;width:170px;text-align:center;font-size:11px;color:#2f3237;font-weight:normal;line-height:20px;">8</div>
<div class="t" style="left:198.00px;top:480.03px;width:170px;text-align:center;font-size:11px;color:#2f3237;font-weight:normal;line-height:20px;">New</div>
<div class="t" style="left:268.00px;top:480.03px;width:170px;text-align:center;font-size:11px;color:#2f3237;font-weight:normal;line-height:20px;">user</div>
<div class="t" style="left:373.00px;top:480.03px;width:170px;text-align:center;font-size:11px;color:#2f3237;font-weight:normal;line-height:20px;">Govt. of Telangana State</div>
<div class="t" style="left:507.00px;top:480.03px;width:170px;text-align:center;font-size:11px;color:#2f3237;font-weight:normal;line-height:20px;">new_1@yopmail.com</div>
<div class="t" style="left:724.40px;top:480.03px;width:170px;text-align:center;font-size:11px;color:#2f3237;font-weight:normal;line-height:20px;">Payments Generate</div>
<div class="t" style="left:927.00px;top:480.03px;width:170px;text-align:center;font-size:11px;color:#2f3237;font-weight:normal;line-height:20px;letter-spacing:-0.5px;">Oct 24, 2025</div>
<div class="t" style="left:1016.50px;top:480.03px;width:170px;text-align:center;font-size:11px;color:#2f3237;font-weight:normal;line-height:20px;">Naman Test User</div>
<div class="t" style="left:1115.50px;top:480.03px;width:170px;text-align:center;font-size:11px;color:#2f3237;font-weight:normal;line-height:20px;letter-spacing:-0.5px;">Oct 24, 2025</div>
<div class="b" style="left:1258px;top:485.29999999999995px;width:62px;height:11.800000000000011px;background:#f6b443;border-radius:3px;"></div>
<div class="t" style="left:1254.00px;top:481.18px;width:70px;text-align:center;font-size:7.2px;color:#fff;font-weight:bold;line-height:20px;">NOT_VERIFIED</div>
<div class="b" style="left:212px;top:507px;width:1116px;height:1px;background:#e7e8ea;"></div>
<div class="t" style="left:144.80px;top:513.33px;width:170px;text-align:center;font-size:11px;color:#2f3237;font-weight:normal;line-height:20px;">9</div>
<div class="t" style="left:198.00px;top:513.33px;width:170px;text-align:center;font-size:11px;color:#2f3237;font-weight:normal;line-height:20px;">asd</div>
<div class="t" style="left:268.00px;top:513.33px;width:170px;text-align:center;font-size:11px;color:#2f3237;font-weight:normal;line-height:20px;">das</div>
<div class="t" style="left:373.00px;top:513.33px;width:170px;text-align:center;font-size:11px;color:#2f3237;font-weight:normal;line-height:20px;">asd</div>
<div class="t" style="left:507.00px;top:513.33px;width:170px;text-align:center;font-size:11px;color:#2f3237;font-weight:normal;line-height:20px;">asddas@mailsec.com</div>
<div class="t" style="left:619.00px;top:513.33px;width:170px;text-align:center;font-size:11px;color:#2f3237;font-weight:normal;line-height:20px;letter-spacing:-0.55px;">+919876543210</div>
<div class="t" style="left:724.40px;top:513.33px;width:170px;text-align:center;font-size:11px;color:#2f3237;font-weight:normal;line-height:20px;">Payments Generate</div>
<div class="t" style="left:927.00px;top:513.33px;width:170px;text-align:center;font-size:11px;color:#2f3237;font-weight:normal;line-height:20px;letter-spacing:-0.5px;">Oct 13, 2025</div>
<div class="t" style="left:1016.50px;top:513.33px;width:170px;text-align:center;font-size:11px;color:#2f3237;font-weight:normal;line-height:20px;">Bill Management</div>
<div class="t" style="left:1115.50px;top:513.33px;width:170px;text-align:center;font-size:11px;color:#2f3237;font-weight:normal;line-height:20px;letter-spacing:-0.5px;">Oct 13, 2025</div>
<div class="b" style="left:1258px;top:518.6px;width:62px;height:11.800000000000068px;background:#f6b443;border-radius:3px;"></div>
<div class="t" style="left:1254.00px;top:514.48px;width:70px;text-align:center;font-size:7.2px;color:#fff;font-weight:bold;line-height:20px;">NOT_VERIFIED</div>
<div class="b" style="left:212px;top:541px;width:1116px;height:1px;background:#e7e8ea;"></div>
<div class="t" style="left:144.80px;top:547.13px;width:170px;text-align:center;font-size:11px;color:#2f3237;font-weight:normal;line-height:20px;">10</div>
<div class="t" style="left:198.00px;top:547.13px;width:170px;text-align:center;font-size:11px;color:#2f3237;font-weight:normal;line-height:20px;">Teja</div>
<div class="t" style="left:373.00px;top:547.13px;width:170px;text-align:center;font-size:11px;color:#2f3237;font-weight:normal;line-height:20px;">livsyt</div>
<div class="t" style="left:507.00px;top:547.13px;width:170px;text-align:center;font-size:11px;color:#2f3237;font-weight:normal;line-height:20px;">teja23@yopmail.com</div>
<div class="t" style="left:619.00px;top:547.13px;width:170px;text-align:center;font-size:11px;color:#2f3237;font-weight:normal;line-height:20px;letter-spacing:-0.55px;">+919876565434</div>
<div class="t" style="left:724.40px;top:547.13px;width:170px;text-align:center;font-size:11px;color:#2f3237;font-weight:normal;line-height:20px;">RFI App-6</div>
<div class="t" style="left:927.00px;top:547.13px;width:170px;text-align:center;font-size:11px;color:#2f3237;font-weight:normal;line-height:20px;letter-spacing:-0.5px;">Sep 18, 2025</div>
<div class="t" style="left:1016.50px;top:547.13px;width:170px;text-align:center;font-size:11px;color:#2f3237;font-weight:normal;line-height:20px;">Bill Management</div>
<div class="t" style="left:1115.50px;top:547.13px;width:170px;text-align:center;font-size:11px;color:#2f3237;font-weight:normal;line-height:20px;letter-spacing:-0.5px;">Sep 18, 2025</div>
<div class="b" style="left:1258px;top:552.4px;width:62px;height:11.800000000000068px;background:#f6b443;border-radius:3px;"></div>
<div class="t" style="left:1254.00px;top:548.28px;width:70px;text-align:center;font-size:7.2px;color:#fff;font-weight:bold;line-height:20px;">NOT_VERIFIED</div>
<div class="b" style="left:212px;top:574px;width:1116px;height:1px;background:#e7e8ea;"></div>
<div class="b" style="left:212px;top:776px;width:1116px;height:1px;background:#dee2e6;"></div>
<div class="b" style="left:211px;top:786.5px;width:148px;height:28.100000000000023px;border:1px solid #d6d9de;"></div>
<div class="t" style="left:218.00px;top:791.32px;font-size:10.3px;color:#2c7be8;font-weight:normal;line-height:20px;">Showing 1 to 10 of 89 entries</div>
<div class="b" style="left:1012px;top:786px;width:249px;height:29px;border:1px solid #dee2e6;"></div>
<div class="b" style="left:1039.7px;top:786px;width:1.0px;height:29px;background:#dee2e6;"></div>
<div class="b" style="left:1067.1px;top:786px;width:1.0px;height:29px;background:#dee2e6;"></div>
<div class="b" style="left:1095.1px;top:786px;width:1.0px;height:29px;background:#dee2e6;"></div>
<div class="b" style="left:1122.7px;top:786px;width:1.0px;height:29px;background:#dee2e6;"></div>
<div class="b" style="left:1150.2px;top:786px;width:1.0px;height:29px;background:#dee2e6;"></div>
<div class="b" style="left:1177.8px;top:786px;width:1.0px;height:29px;background:#dee2e6;"></div>
<div class="b" style="left:1205.3px;top:786px;width:1.0px;height:29px;background:#dee2e6;"></div>
<div class="b" style="left:1232.9px;top:786px;width:1.0px;height:29px;background:#dee2e6;"></div>
<div class="b" style="left:1067.1px;top:786px;width:28.0px;height:29px;background:#0b7bff;"></div>
<div class="t" style="left:1011.95px;top:789.65px;width:28px;text-align:center;font-size:13px;color:#4a90f2;font-weight:normal;line-height:20px;">«</div>
<div class="t" style="left:1039.40px;top:789.65px;width:28px;text-align:center;font-size:13px;color:#4a90f2;font-weight:normal;line-height:20px;">‹</div>
<div class="t" style="left:1067.10px;top:792.14px;width:28px;text-align:center;font-size:12px;color:#fff;font-weight:normal;line-height:20px;">1</div>
<div class="t" style="left:1094.90px;top:792.14px;width:28px;text-align:center;font-size:12px;color:#1a7cf6;font-weight:normal;line-height:20px;">2</div>
<div class="t" style="left:1122.45px;top:792.14px;width:28px;text-align:center;font-size:12px;color:#1a7cf6;font-weight:normal;line-height:20px;">3</div>
<div class="t" style="left:1150.00px;top:792.14px;width:28px;text-align:center;font-size:12px;color:#1a7cf6;font-weight:normal;line-height:20px;">4</div>
<div class="t" style="left:1177.55px;top:792.14px;width:28px;text-align:center;font-size:12px;color:#1a7cf6;font-weight:normal;line-height:20px;">5</div>
<div class="t" style="left:1205.10px;top:789.65px;width:28px;text-align:center;font-size:13px;color:#4a90f2;font-weight:normal;line-height:20px;">›</div>
<div class="t" style="left:1232.85px;top:789.65px;width:28px;text-align:center;font-size:13px;color:#4a90f2;font-weight:normal;line-height:20px;">»</div>
<div class="b" style="left:1267.4px;top:786.2px;width:45.09999999999991px;height:28.5px;border:1px solid #ced4da;border-radius:3px;"></div>
<div class="t" style="left:1272.00px;top:790.94px;font-size:12px;color:#333;font-weight:normal;line-height:20px;">10</div>
<svg class="b" style="left:1292px;top:796px;" width="12" height="8" viewBox="0 0 12 8"><polyline points="2,1.5 6,5.5 10,1.5" fill="none" stroke="#444" stroke-width="1.3"/></svg>
<div class="b" style="left:1346px;top:204.5px;width:551px;height:619.5px;border-radius:4px;background:#fff;box-shadow:0 0 1.5px rgba(0,0,0,0.13);"></div>
<div class="t" style="left:1358.50px;top:214.14px;font-size:12.6px;color:#3b404b;font-weight:normal;line-height:20px;">Edit User</div>
<div class="t" style="left:1358.50px;top:251.62px;font-size:10.8px;color:#3e4a7c;font-weight:normal;line-height:20px;-webkit-text-stroke:0.2px #3e4a7c;">First Name*</div>
<div class="b" style="left:1358px;top:276.3px;width:526px;height:28.30000000000001px;border:1px solid #c9cdd4;border-radius:3px;background:#fff;"></div>
<div class="t" style="left:1366.00px;top:280.07px;font-size:10.8px;color:#2c2f35;font-weight:normal;line-height:20px;">Demo</div>
<div class="t" style="left:1358.50px;top:304.82px;font-size:10.8px;color:#3e4a7c;font-weight:normal;line-height:20px;-webkit-text-stroke:0.2px #3e4a7c;">Last Name</div>
<div class="b" style="left:1358px;top:328.4px;width:526px;height:28.30000000000001px;border:1px solid #c9cdd4;border-radius:3px;background:#fff;"></div>
<div class="t" style="left:1366.00px;top:332.17px;font-size:10.8px;color:#2c2f35;font-weight:normal;line-height:20px;">User</div>
<div class="t" style="left:1358.50px;top:356.62px;font-size:10.8px;color:#3e4a7c;font-weight:normal;line-height:20px;-webkit-text-stroke:0.2px #3e4a7c;">Email*</div>
<div class="b" style="left:1358px;top:381.3px;width:526px;height:28.19999999999999px;border:1px solid #c9cdd4;border-radius:3px;background:#fff;"></div>
<div class="t" style="left:1366.00px;top:385.02px;font-size:10.8px;color:#2c2f35;font-weight:normal;line-height:20px;">vt@yopmail.com</div>
<div class="t" style="left:1358.50px;top:409.82px;font-size:10.8px;color:#3e4a7c;font-weight:normal;line-height:20px;-webkit-text-stroke:0.2px #3e4a7c;">Mobile Number</div>
<div class="b" style="left:1358px;top:433.3px;width:526px;height:28.0px;border:1px solid #c9cdd4;border-radius:3px;background:#fff;"></div>
<div class="t" style="left:1358.50px;top:481.92px;font-size:10.8px;color:#3e4a7c;font-weight:normal;line-height:20px;-webkit-text-stroke:0.2px #3e4a7c;">User Organization Long Name*</div>
<div class="b" style="left:1358px;top:505.6px;width:526px;height:27.799999999999955px;border:1px solid #c9cdd4;border-radius:3px;background:#fff;"></div>
<div class="t" style="left:1366.00px;top:509.12px;font-size:10.8px;color:#2c2f35;font-weight:normal;line-height:20px;">DemoOrg</div>
<div class="t" style="left:1358.50px;top:534.12px;font-size:10.8px;color:#3e4a7c;font-weight:normal;line-height:20px;-webkit-text-stroke:0.2px #3e4a7c;">User Organization Short Name*</div>
<div class="b" style="left:1358px;top:558.7px;width:526px;height:27.799999999999955px;border:1px solid #c9cdd4;border-radius:3px;background:#fff;"></div>
<div class="t" style="left:1366.00px;top:562.22px;font-size:10.8px;color:#2c2f35;font-weight:normal;line-height:20px;">DemoOrg</div>
<div class="t" style="left:1358.50px;top:586.92px;font-size:10.8px;color:#3e4a7c;font-weight:normal;line-height:20px;-webkit-text-stroke:0.2px #3e4a7c;">Designation</div>
<div class="b" style="left:1358px;top:610.9px;width:526px;height:27.600000000000023px;border:1px solid #c9cdd4;border-radius:3px;background:#fff;"></div>
<div class="t" style="left:1366.00px;top:614.32px;font-size:10.8px;color:#2c2f35;font-weight:normal;line-height:20px;">Demo Emplyee</div>
<svg class="b" style="left:1365px;top:443px;" width="15" height="10" viewBox="0 0 15 10"><rect x="0" y="0" width="15" height="3.3" fill="#f7931e"/><rect x="0" y="3.3" width="15" height="3.4" fill="#fff"/><rect x="0" y="6.7" width="15" height="3.3" fill="#138808"/><circle cx="7.5" cy="5" r="1" fill="none" stroke="#5a5fbf" stroke-width="0.5"/></svg>
<svg class="b" style="left:1384px;top:445px;" width="6" height="5" viewBox="0 0 6 5"><path d="M0.5 1 H5.5 L3 4 Z" fill="#444"/></svg>
<div class="t" style="left:1398.80px;top:437.42px;font-size:10.8px;color:#2c2f35;font-weight:normal;line-height:20px;letter-spacing:-0.45px;">+911234567890</div>
<div class="b" style="left:1358.5px;top:470.2px;width:19.09999999999991px;height:10.5px;border:1px solid #d5d8de;border-radius:6px;background:#fff;"></div>
<div class="b" style="left:1361.3px;top:472.6px;width:5.8px;height:5.8px;border-radius:50%;background:#c4c4c6;"></div>
<div class="t" style="left:1383.00px;top:464.83px;font-size:11.1px;color:#33363c;font-weight:normal;line-height:20px;">WhatsApp Notifications</div>
<div class="t" style="left:1358.50px;top:638.62px;font-size:10.8px;color:#3e4a7c;font-weight:normal;line-height:20px;-webkit-text-stroke:0.2px #3e4a7c;">Role*</div>
<div class="b" style="left:1358px;top:663.4px;width:526px;height:26.200000000000045px;border:1px solid #c9cdd4;border-radius:3px;background:#fff;"></div>
<div class="t" style="left:1367.00px;top:665.92px;font-size:10.8px;color:#2c2f35;font-weight:normal;line-height:20px;">BOQ Management</div>
<svg class="b" style="left:1852px;top:671.5px;" width="8" height="8" viewBox="0 0 8 8"><path d="M1 1 L7 7 M7 1 L1 7" stroke="#777" stroke-width="1.1"/></svg>
<svg class="b" style="left:1868px;top:673.5px;" width="8" height="5" viewBox="0 0 8 5"><path d="M0.5 0.8 H7.5 L4 4.3 Z" fill="#888"/></svg>
<div class="t" style="left:1358.50px;top:689.62px;font-size:10.8px;color:#3e4a7c;font-weight:normal;line-height:20px;-webkit-text-stroke:0.2px #3e4a7c;">Project</div>
<div class="b" style="left:1358px;top:714.4px;width:526px;height:26.200000000000045px;border:1px solid #c9cdd4;border-radius:3px;background:#f6f7fb;"></div>
<div class="t" style="left:1367.00px;top:714.72px;font-size:10.8px;color:#9b9ea4;font-weight:normal;line-height:20px;">Verify user to assign project</div>
<svg class="b" style="left:1868px;top:724px;" width="8" height="5" viewBox="0 0 8 5"><path d="M0.5 0.8 H7.5 L4 4.3 Z" fill="#888"/></svg>
<div class="b" style="left:1505.2px;top:768.3px;width:88.79999999999995px;height:25.5px;border:1.2px solid #3d9fe2;border-radius:3px;background:#fff;"></div>
<svg class="b" style="left:1516.5px;top:776.5px;" width="10" height="8" viewBox="0 0 10 8"><path d="M0.8 4.5 L2.8 6.5 L6.5 2.5 M4.5 6.5 L8.5 2.5" fill="none" stroke="#3d9fe2" stroke-width="1"/></svg>
<div class="t" style="left:1532.40px;top:770.92px;font-size:10.1px;color:#3d9fe2;font-weight:normal;line-height:20px;">Verify User</div>
<div class="b" style="left:1601.3px;top:768.2px;width:60.200000000000045px;height:25.5px;border:1.2px solid #2f6be6;border-radius:3px;background:#fff;"></div>
<svg class="b" style="left:1612.5px;top:776.5px;" width="9" height="9" viewBox="0 0 9 9"><rect x="0.7" y="0.7" width="7.6" height="7.6" rx="1" fill="none" stroke="#2f6be6" stroke-width="1.3"/><rect x="2.5" y="1" width="4" height="2.2" fill="#2f6be6"/><rect x="2.5" y="5" width="4" height="2.5" fill="#2f6be6"/></svg>
<div class="t" style="left:1627.00px;top:770.92px;font-size:10.4px;color:#2f6be6;font-weight:normal;line-height:20px;">Save</div>
<div class="b" style="left:1668px;top:768.2px;width:69.70000000000005px;height:25.5px;border:1.2px solid #eb6e50;border-radius:3px;background:#fff;"></div>
<svg class="b" style="left:1680px;top:775.5px;" width="10" height="10" viewBox="0 0 10 10"><path d="M1 2.5 H9 M3.5 2.5 V1 H6.5 V2.5" fill="none" stroke="#e8604a" stroke-width="1.1"/><rect x="2" y="3" width="6" height="6.2" rx="0.8" fill="none" stroke="#e8604a" stroke-width="1.2"/><circle cx="5" cy="6" r="1" fill="#e8604a"/></svg>
<div class="t" style="left:1695.00px;top:770.92px;font-size:10.4px;color:#e8604a;font-weight:normal;line-height:20px;">Delete</div>
<svg class="b" style="left:1390px;top:745px;" width="220" height="80" viewBox="0 0 220 80">
<polygon points="16.5,28.5 59.5,28.5 59.5,15 102.5,42 59.5,68.5 59.5,55 16.5,55" fill="none" stroke="#e8192c" stroke-width="4.5" stroke-linejoin="round"/>
<rect x="106.5" y="11.5" width="103" height="54.5" fill="none" stroke="#e8192c" stroke-width="4.6"/>
</svg>
<div class="b" style="left:0px;top:997px;width:1917px;height:1px;background:#c6c8ce;"></div>
</body></html>
